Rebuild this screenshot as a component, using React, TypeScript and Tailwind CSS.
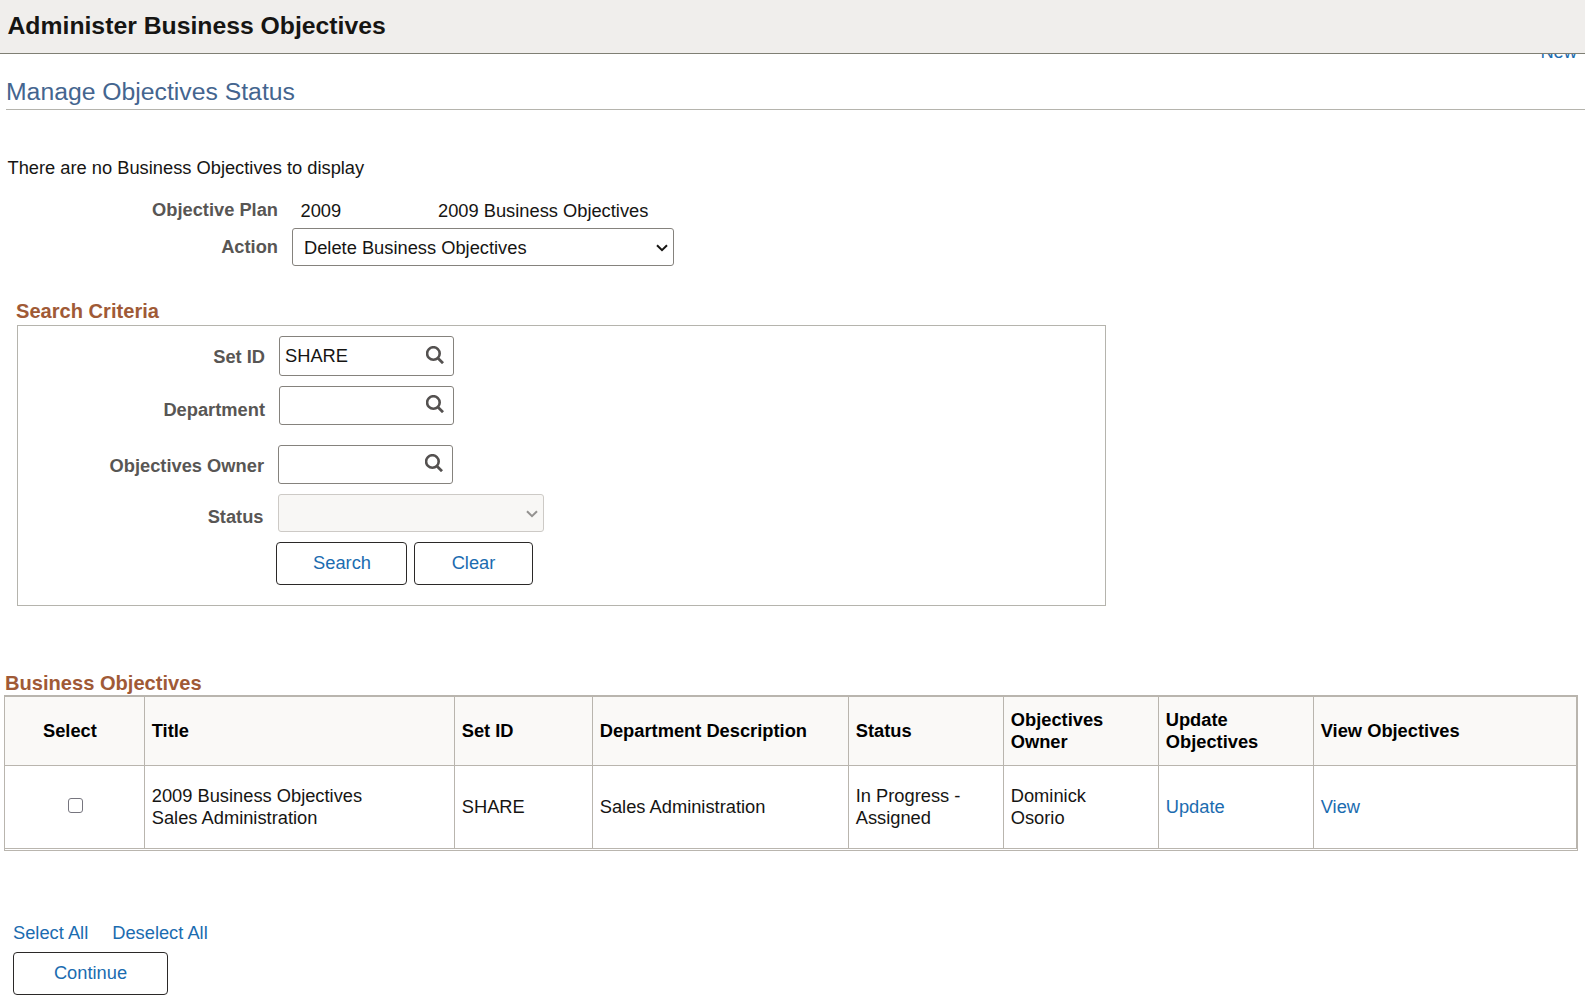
import type { ReactNode } from "react";

const columns = [
  { label: "Select", width: "w-[140px]" },
  { label: "Title", width: "w-[310px]" },
  { label: "Set ID", width: "w-[138px]" },
  { label: "Department Description", width: "w-[256px]" },
  { label: "Status", width: "w-[155px]" },
  { label: "Objectives Owner", width: "w-[155px]" },
  { label: "Update Objectives", width: "w-[155px]" },
  { label: "View Objectives", width: "w-[263px]" },
];

function SearchIcon() {
  return (
    <svg viewBox="0 0 18 18" className="h-[18px] w-[18px]" fill="none" stroke="#545150">
      <circle cx="7.4" cy="7.5" r="6.3" strokeWidth="2.6" />
      <path d="M11.8 12l5.2 5.2" strokeWidth="2.8" />
    </svg>
  );
}

function Chevron({ className }: { className: string }) {
  return (
    <svg viewBox="0 0 12 8" className={`h-2 w-3 ${className}`} fill="none" stroke="currentColor" strokeWidth="2">
      <path d="M1 1.2l5 5 5-5" />
    </svg>
  );
}

function Label({ className, children }: { className: string; children: ReactNode }) {
  return <div className={`text-right font-bold text-[#585654] ${className}`}>{children}</div>;
}

function LookupField({ value, className }: { value?: string; className: string }) {
  return (
    <div className={`flex w-[175px] items-start justify-between rounded-[3px] border border-[#85827d] pl-[5px] ${className}`}>
      <span className="-mt-px">{value}</span>
      <SearchIcon />
    </div>
  );
}

function Button({ className, children }: { className: string; children: ReactNode }) {
  return (
    <button className={`flex h-[43px] justify-center rounded-[4px] border border-[#2b2928] bg-white pt-[9px] text-[#1b6cb0] ${className}`}>
      {children}
    </button>
  );
}

export default function App() {
  return (
    <div className="h-[1003px] w-[1585px] overflow-hidden bg-white font-['Liberation_Sans',Arial,sans-serif] text-[18.3px] leading-[22px] text-[#161513]">
      <header className="h-[54px] border-b border-[#7f7f74] bg-[#f0eeec] pl-[7.5px] pt-[11px]">
        <h1 className="text-[24.75px] font-bold leading-[30px]">Administer Business Objectives</h1>
      </header>

      {/* Utility link scrolled partly under the header */}
      <div className="flex h-[23px] items-start justify-end overflow-hidden pr-2">
        <a className="-mt-[13px] text-[#1b6cb0]">New</a>
      </div>

      <h2 className="ml-1.5 h-[33px] border-b border-[#b5b4ad] text-[24.75px] leading-[30px] text-[#44658f]">
        Manage Objectives Status
      </h2>

      <p className="mt-[47px] pl-[7.5px]">There are no Business Objectives to display</p>

      {/* Plan summary */}
      <div className="mt-5 flex h-[29px]">
        <Label className="w-[278px]">Objective Plan</Label>
        <div className="ml-[22.5px] mt-px w-[137.5px]">2009</div>
        <div className="mt-px">2009 Business Objectives</div>
      </div>
      <div className="flex h-[38px]">
        <Label className="w-[278px] pt-2">Action</Label>
        <div className="ml-[14px] flex w-[382px] justify-between rounded-[3px] border border-[#85827d] pl-[11px] pr-[5px] pt-2">
          Delete Business Objectives
          <Chevron className="mt-[7px] text-[#161513]" />
        </div>
      </div>

      {/* Search criteria */}
      <h3 className="mt-[34px] h-[25px] pl-4 text-[20.1px] font-bold text-[#a05a36]">Search Criteria</h3>
      <section className="ml-[17px] h-[281px] w-[1089px] border border-[#b5b4ad] pt-[10px]">
        <div className="flex h-[50px]">
          <Label className="w-[247px] pt-[10px]">Set ID</Label>
          <LookupField value="SHARE" className="ml-[14px] h-10 pr-[9px] pt-[9px]" />
        </div>
        <div className="flex h-[59px]">
          <Label className="w-[247px] pt-[13px]">Department</Label>
          <LookupField className="ml-[14px] h-[39px] pr-[9px] pt-[8px]" />
        </div>
        <div className="flex h-[49px]">
          <Label className="w-[246px] pt-[10px]">Objectives Owner</Label>
          <LookupField className="ml-[14px] h-[39px] pr-[9px] pt-[8px]" />
        </div>
        <div className="flex h-12">
          <Label className="w-[245.5px] pt-3">Status</Label>
          <div className="ml-[14.5px] flex h-[38px] w-[266px] justify-end rounded-[3px] border border-[#cdcac6] bg-[#f8f7f5] pr-[5px] pt-[15px]">
            <Chevron className="text-[#949290]" />
          </div>
        </div>
        <div className="ml-[258px] flex gap-[7px]">
          <Button className="w-[131px] pl-[7px] pr-1.5">Search</Button>
          <Button className="w-[119px]">Clear</Button>
        </div>
      </section>

      {/* Results */}
      <h3 className="mt-[66px] h-[23px] pl-[5px] text-[20.1px] font-bold text-[#a05a36]">Business Objectives</h3>
      <div className="ml-1 w-[1574px] border border-[#b9b5ae] pb-px">
        <table className="w-[1572px] table-fixed border-separate border-spacing-0 text-left">
          <thead className="bg-[#faf9f7] text-black">
            <tr className="h-[70px]">
              {columns.map((col, i) => (
                <th
                  key={col.label}
                  className={`border-y border-r border-[#b9b5ae] pl-[6.75px] pr-4 font-bold ${i === 0 ? "text-center" : ""} ${col.width}`}
                >
                  {col.label}
                </th>
              ))}
            </tr>
          </thead>
          <tbody>
            <tr className="h-[83px] *:border-b *:border-r *:border-[#b9b5ae] *:pl-[6.75px]">
              <td>
                <input type="checkbox" className="-mt-[3px] ml-14 block h-[15px] w-[15px] appearance-none rounded-[3px] border border-[#76757e] bg-white" />
              </td>
              <td>
                2009 Business Objectives
                <br />
                Sales Administration
              </td>
              <td>SHARE</td>
              <td>Sales Administration</td>
              <td>
                In Progress -
                <br />
                Assigned
              </td>
              <td>
                Dominick
                <br />
                Osorio
              </td>
              <td>
                <a className="text-[#1b6cb0]">Update</a>
              </td>
              <td>
                <a className="text-[#1b6cb0]">View</a>
              </td>
            </tr>
          </tbody>
        </table>
      </div>

      <div className="mt-[71px] flex h-[30px] gap-6 pl-[13px] text-[#1b6cb0]">
        <a>Select All</a>
        <a>Deselect All</a>
      </div>
      <Button className="ml-[13px] w-[155px]">Continue</Button>
    </div>
  );
}
